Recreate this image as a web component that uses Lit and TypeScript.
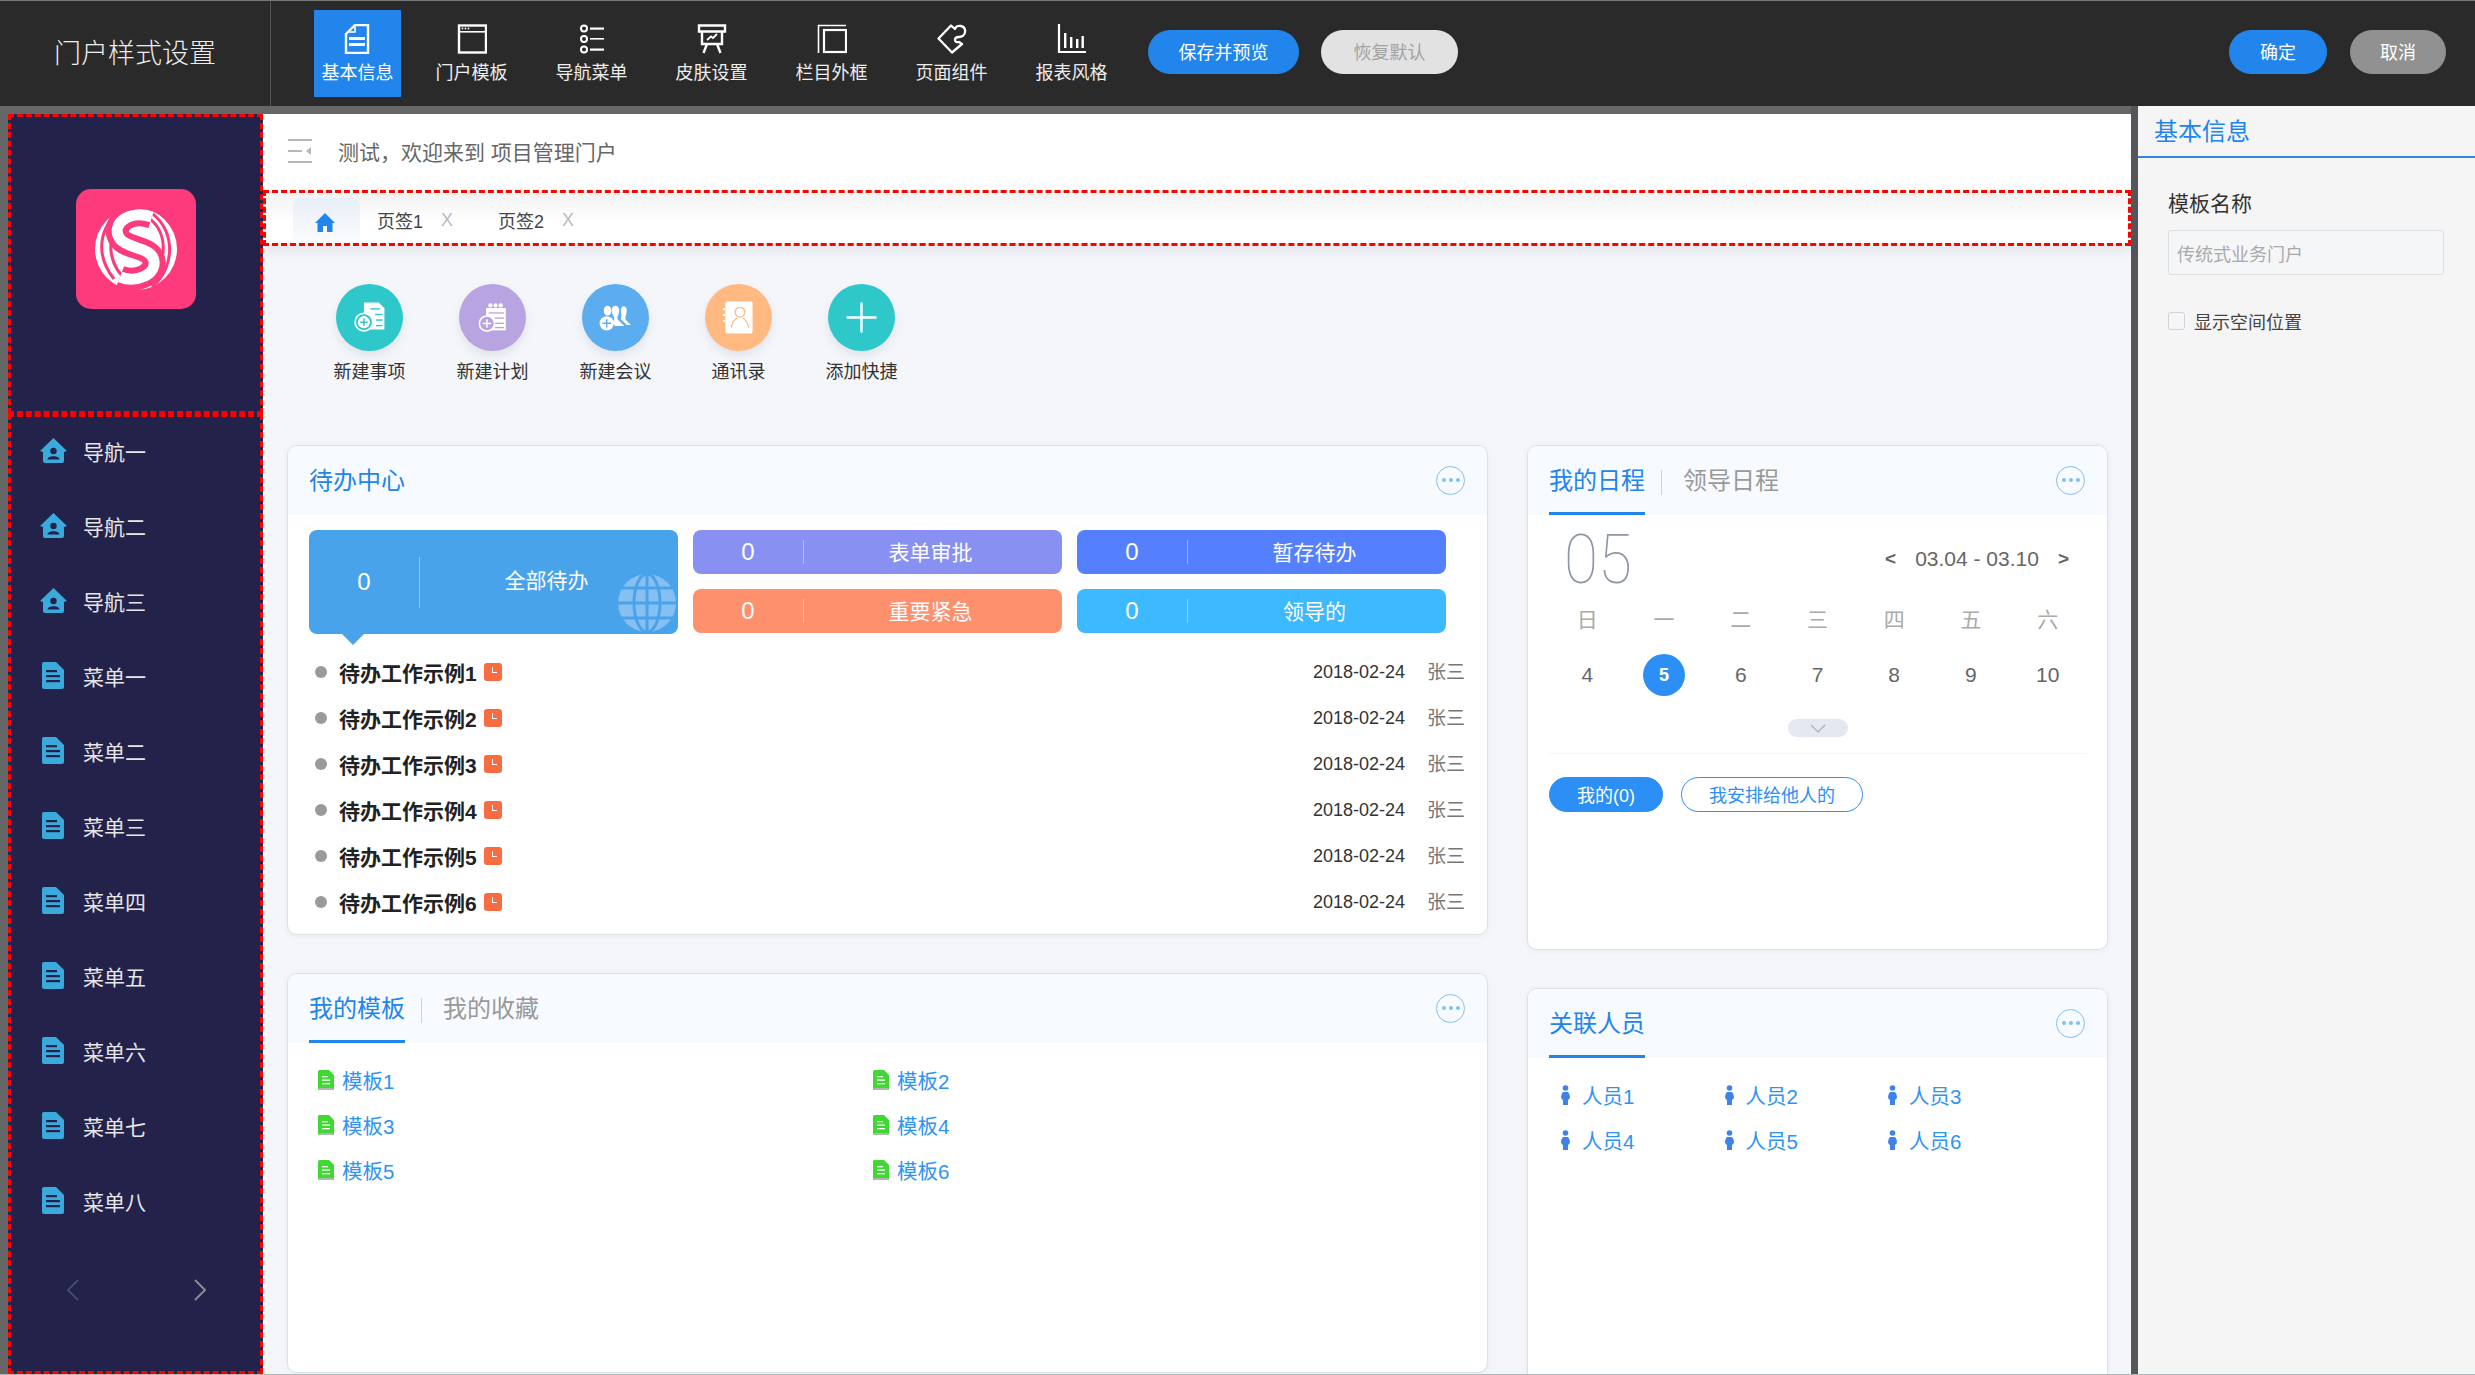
import { LitElement, html, css, svg } from "lit";
import { customElement } from "lit/decorators.js";

const topIcons = [
  svg`<path d="M7 6 L12 1 H25 V29 H3 V10 Z" fill="none" stroke="#fff" stroke-width="2.4"/><path d="M12 1 V8 H4" fill="none" stroke="#fff" stroke-width="1.6"/><rect x="6" y="13" width="16" height="3" fill="#fff"/><rect x="6" y="19" width="16" height="3" fill="#fff"/>`,
  svg`<rect x="2" y="1.5" width="27" height="27" fill="none" stroke="#fff" stroke-width="2.4"/><rect x="2" y="7" width="27" height="1.6" fill="#fff"/><circle cx="5.5" cy="4.5" r=".9" fill="#fff"/><circle cx="8.5" cy="4.5" r=".9" fill="#fff"/><circle cx="11.5" cy="4.5" r=".9" fill="#fff"/>`,
  svg`<g fill="none" stroke="#fff" stroke-width="2"><circle cx="7" cy="4.5" r="3"/><circle cx="7" cy="15" r="3"/><circle cx="7" cy="25.5" r="3"/></g><rect x="13" y="3.5" width="14" height="2.2" fill="#fff"/><rect x="13" y="14" width="14" height="1.6" fill="#fff"/><rect x="13" y="24.5" width="14" height="2.2" fill="#fff"/>`,
  svg`<g fill="none" stroke="#fff" stroke-width="2.4"><path d="M2 1.5 H28 V7.5 H2 Z"/><path d="M5 7.5 V20 H25 V7.5"/><path d="M10 20 L6.5 29 M20 20 L23.5 29"/></g><path d="M10 16 L14 12.5 L16 14 L20 10" fill="none" stroke="#fff" stroke-width="1.8"/>`,
  svg`<path d="M1.5 29 V1.5 H29" fill="none" stroke="#fff" stroke-width="1.6"/><rect x="7" y="6" width="22" height="22" fill="none" stroke="#fff" stroke-width="2.2"/>`,
  svg`<path d="M1.500 14.500 L14 1.500 L18 5 C19 0 29 1 28 8 C28 11 25 13 22 13 C20 13 18 14 18 16 C18 18 20 18.500 22 18 L25 20 L15 28.500 Z" fill="none" stroke="#fff" stroke-width="2.300" stroke-linejoin="round"/>`,
  svg`<path d="M2 0 V28 H29" fill="none" stroke="#fff" stroke-width="2.2"/><g fill="#fff"><rect x="7" y="9" width="2.4" height="15"/><rect x="13" y="13" width="2.4" height="11"/><rect x="19" y="15" width="2.400" height="9"/><rect x="24.500" y="12" width="2.400" height="12"/></g>`,
];
const tabs = ["基本信息", "门户模板", "导航菜单", "皮肤设置", "栏目外框", "页面组件", "报表风格"];

const quick = [
  { label: "新建事项", color: "#2ec8ca", box: "-16 -8 72 72", icon: svg`<path d="M14 12 H30 L36 18 V41 H14 Z" fill="#fff"/><g fill="#2ec8ca"><rect x="21" y="18" width="10" height="1.500"/><rect x="26" y="24" width="8" height="1.500"/><rect x="27" y="30" width="7" height="1.500"/><rect x="27" y="36" width="7" height="1.500"/></g><circle cx="14" cy="33" r="9.500" fill="#2ec8ca" stroke="#fff" stroke-width="1.800"/><circle cx="14" cy="33" r="6.500" fill="#fff"/><path d="M14 29 V37 M10 33 H18" stroke="#2ec8ca" stroke-width="1.600"/>` },
  { label: "新建计划", color: "#b7a4e0", box: "-16.500 -14 78 78", icon: svg`<path d="M15 14 H38 V40 H15 Z" fill="#fff"/><g fill="#fff"><circle cx="20" cy="11" r="2.500"/><circle cx="26" cy="11" r="2.500"/><circle cx="32" cy="11" r="2.500"/></g><g fill="#b7a4e0"><rect x="18" y="19" width="18" height="1.500"/><rect x="25" y="25" width="11" height="1.500"/><rect x="25" y="31" width="11" height="1.500"/><rect x="25" y="36" width="11" height="1.500"/></g><circle cx="16" cy="32" r="8.800" fill="#b7a4e0" stroke="#fff" stroke-width="1.800"/><path d="M16 27 V37 M11 32 H21" stroke="#fff" stroke-width="1.800"/>` },
  { label: "新建会议", color: "#5badf0", box: "-13.500 -14 80 80", icon: svg`<path d="M22 17 C22 10 31 10 31 18 C31 22 28 25 29 28 L37 36 H26 C22 32 26 28 25 26 C24 24 22 22 22 17 Z" fill="#fff"/><path d="M33 17 C33 11 40 11 40 18 C40 23 37 25 39 29 L45 35 H40 L33 28 C34 25 33 21 33 17 Z" fill="#fff"/><ellipse cx="17" cy="18" rx="4.500" ry="6" fill="#fff"/><circle cx="16" cy="33" r="8.500" fill="#fff"/><path d="M16 28 V38 M11 33 H21" stroke="#5badf0" stroke-width="1.800"/>` },
  { label: "通讯录", color: "#ffb981", box: "-9 -9 69 69", icon: svg`<rect x="12" y="9" width="28" height="33" rx="2" fill="#fff"/><g stroke="#ffb981" stroke-width="1.300" fill="none"><path d="M9.500 17 H14 M9.500 23 H14 M9.500 29 H14" stroke="#fff" stroke-width="2"/><circle cx="27" cy="20" r="5"/><path d="M18 36 C19 29 23 27 24 26 M36 36 C35 29 31 27 30 26"/></g>` },
  { label: "添加快捷", color: "#2ec8ca", box: "-7.500 -6.500 67 67", icon: svg`<path d="M26 13 V41 M12 27 H40" stroke="#fff" stroke-width="2.400" stroke-linecap="round"/>` },
];

const menu = [
  ["导航一", "home"], ["导航二", "home"], ["导航三", "home"],
  ["菜单一", "doc"], ["菜单二", "doc"], ["菜单三", "doc"], ["菜单四", "doc"],
  ["菜单五", "doc"], ["菜单六", "doc"], ["菜单七", "doc"], ["菜单八", "doc"],
];

const stats = [
  { label: "表单审批", cls: "violet" },
  { label: "暂存待办", cls: "royal" },
  { label: "重要紧急", cls: "coral" },
  { label: "领导的", cls: "sky" },
];

const homeIcon = html`<svg class="nav-home" viewBox="0 0 27 25"><path d="M13.500 0 L27 13 L24 14 V23 Q24 25 22 25 H5 Q3 25 3 23 V14 L0 13 Z" fill="#3aa9dc"/><circle cx="13.500" cy="13" r="3.200" fill="#22224b"/><path d="M7.500 21.500 C7.500 17 19.500 17 19.500 21.500 Z" fill="#22224b"/></svg>`;
const docIcon = html`<svg class="nav-doc" viewBox="0 0 22 27"><path d="M2 0 H14 L22 8 V25 Q22 27 20 27 H2 Q0 27 0 25 V2 Q0 0 2 0 Z" fill="#3aa9dc"/><g fill="#22224b"><rect x="4" y="8" width="11" height="2.200"/><rect x="4" y="13" width="14" height="2.200"/><rect x="4" y="18" width="14" height="2.200"/></g></svg>`;
const moreBtn = html`<span class="more"><i></i><i></i><i></i></span>`;

@customElement("app-root")
export class AppRoot extends LitElement {
  static styles = css`
    :host {
      display: block;
      width: 2475px;
      height: 1375px;
      overflow: hidden;
      font-family: "Liberation Sans", "Noto Sans CJK SC", sans-serif;
      color: #333;
    }
    * { box-sizing: border-box; }
    .shell { width: 2475px; height: 1375px; display: flex; flex-direction: column; background: #666; border-bottom: 1px solid #aeb8bc; overflow: hidden; }
    .top { height: 106px; flex: none; background: #2a2a2a; border-top: 1px solid #777; display: flex; align-items: flex-start; color: #fff; }
    .brand { width: 271px; height: 105px; border-right: 1px solid #555; display: flex; align-items: center; justify-content: center; font-size: 27px; font-weight: 300; color: #eee; flex: none; padding-bottom: 4px; }
    .top-tabs { display: flex; gap: 33px; margin-left: 43px; margin-top: 9px; }
    .top-tab { width: 87px; height: 87px; display: flex; flex-direction: column; align-items: center; padding-top: 14px; font-size: 18px; line-height: 24px; white-space: nowrap; color: #eee; }
    .top-tab.on { background: #2185eb; color: #fff; margin-right: -6px; }
    .top-tab svg { width: 30px; height: 30px; margin-bottom: 7px; flex: none; }
    .btn { height: 44px; border-radius: 22px; display: flex; align-items: center; justify-content: center; font-size: 18px; flex: none; margin-top: 29px; padding-bottom: 2px; }
    .btn.blue { background: #2185eb; color: #fff; }
    .btn.light { background: #e2e2e2; color: #a3a3a3; }
    .btn.gray { background: #919191; color: #fff; }
    .save { width: 151px; margin-left: 33px; }
    .reset { width: 137px; margin-left: 22px; }
    .ok { width: 98px; margin-left: auto; }
    .cancel { width: 96px; margin-left: 23px; margin-right: 29px; }

    .body { flex: 1; display: flex; min-height: 0; }
    .stage { flex: 1; display: flex; padding: 8px 0 0 8px; min-width: 0; }
    .side { width: 255px; flex: none; background: #22224b; display: flex; flex-direction: column; }
    .logo-box { height: 300px; flex: none; border: 3px dashed #f00; padding: 72px 0 0 65px; }
    .logo { width: 120px; height: 120px; }
    .nav { flex: 1; border: 3px dashed #f00; display: flex; flex-direction: column; gap: 5px; padding-left: 29px; overflow: hidden; }
    .nav-row { height: 70px; flex: none; display: flex; align-items: center; color: #e6e6e6; font-size: 21px; padding-bottom: 3px; }
    .nav-ico { width: 43px; flex: none; display: flex; justify-content: flex-start; }
    .nav-home { width: 27px; height: 25px; }
    .nav-doc { width: 22px; height: 27px; margin-left: 2px; }
    .pager { display: flex; justify-content: space-between; padding: 37px 53px 0 26px; }
    .pager svg { width: 13px; height: 22px; }

    .main { flex: 1; min-width: 0; display: flex; flex-direction: column; }
    .hello { height: 76px; flex: none; background: #fff; display: flex; align-items: center; padding-left: 25px; font-size: 21px; color: #666; padding-bottom: 3px; }
    .hello svg { width: 24px; height: 24px; margin-right: 26px; }
    .strip { height: 56px; flex: none; position: relative; z-index: 1; border: 3px dashed #f00; background: linear-gradient(#f3f3f3, #fff 60%); display: flex; align-items: flex-end; padding-left: 27px; box-shadow: 0 6px 10px rgba(60, 70, 100, .08); }
    .home-tab { width: 67px; height: 45px; border-radius: 8px 8px 0 0; background: linear-gradient(#e8eff8, #fbfcfe); display: flex; align-items: center; justify-content: center; padding: 4px 3px 0 0; }
    .home-tab svg { width: 20px; height: 19px; }
    .page-tab { font-size: 18px; color: #444; display: flex; height: 45px; align-items: center; padding-bottom: 1px; }
    .page-tab b { font-weight: 400; color: #b6bdc3; margin-left: 18px; }
    .t1 { margin-left: 17px; }
    .t2 { margin-left: 45px; }

    .content { flex: 1; min-height: 0; overflow: hidden; background: #f4f6fa; padding: 38px 0 0 24px; }
    .quick { display: flex; margin-left: 21px; height: 161px; }
    .q { width: 123px; display: flex; flex-direction: column; align-items: center; font-size: 18px; line-height: 24px; color: #333; }
    .q-c { width: 67px; height: 67px; border-radius: 50%; margin-bottom: 9px; box-shadow: 0 5px 10px rgba(90, 100, 130, .12); }
    .q-c svg { width: 67px; height: 67px; display: block; }
    .cols { display: flex; gap: 39px; align-items: flex-start; }
    .col { display: flex; flex-direction: column; gap: 38px; flex: none; }
    .col.l { width: 1201px; }
    .col.r { width: 581px; }
    .card { background: #fff; border: 1px solid #dde1e6; border-radius: 10px; box-shadow: 0 1px 6px rgba(90, 100, 130, .08); overflow: hidden; flex: none; }
    .h-todo { height: 490px; }
    .h-tpl { height: 400px; }
    .h-cal { height: 505px; }
    .h-ppl { height: 400px; }
    .card-h { height: 70px; background: #f7faff; display: flex; align-items: stretch; padding: 0 22px 0 21px; font-size: 24px; margin-top: -1px; }
    .tab { display: flex; align-items: center; border-bottom: 3px solid transparent; color: #999; }
    .tab.on { color: #2185eb; border-bottom-color: #2185eb; }
    .tab.plain { border-bottom-color: transparent; }
    .bar { width: 1px; height: 25px; background: #cfd3d8; margin: 25px 21px 0 16px; }
    .more { margin-left: auto; align-self: center; width: 29px; height: 29px; border: 1px solid #7cc0f5; border-radius: 50%; display: flex; align-items: center; justify-content: center; gap: 3px; }
    .more i { width: 4px; height: 4px; border-radius: 50%; background: #7cc0f5; }

    .todo { padding: 15px 22px 0 21px; }
    .stat-grid { display: grid; grid-template-columns: repeat(3, 369px); grid-template-rows: 44px 45px; gap: 15px; }
    .stat { height: 44px; border-radius: 8px; color: #fff; display: flex; align-items: center; font-size: 21px; }
    .stat .n { width: 110px; flex: none; text-align: center; font-size: 24px; }
    .stat .sep { width: 1px; height: 24px; background: rgba(255, 255, 255, .4); flex: none; }
    .stat .t { flex: 1; text-align: center; padding: 0 5px 3px 0; }
    .violet { background: #8891f2; }
    .royal { background: #5480ff; }
    .coral { background: #ff906e; }
    .sky { background: #3cb9ff; }
    .big { grid-row: 1 / span 2; height: 104px; background: #48a3eb; position: relative; }
    .big .sep { height: 51px; }
    .big .t { padding-bottom: 6px; }
    .big::after { content: ""; position: absolute; left: 33px; top: 104px; border: 11px solid transparent; border-top-color: #48a3eb; border-bottom: 0; }
    .globe { position: absolute; right: 0; bottom: 2px; width: 61px; height: 58px; }
    .list { margin-top: 15px; }
    .row { height: 46px; display: flex; align-items: center; padding-right: 0; }
    .dot { width: 12px; height: 12px; border-radius: 50%; background: #9a9a9a; margin-left: 6px; }
    .row .name { font-size: 21px; font-weight: 700; color: #222; margin-left: 12px; }
    .flag { width: 18px; height: 18px; border-radius: 3px; background: #f96b40; margin-left: 7px; position: relative; }
    .flag::after { content: ""; position: absolute; left: 8px; top: 4px; width: 4px; height: 5px; border-left: 1.500px solid #fff; border-bottom: 1.500px solid #fff; }
    .date { margin-left: auto; font-size: 18px; color: #333; }
    .who { margin-left: 22px; font-size: 19px; color: #777; padding-bottom: 3px; }

    .tpl { display: grid; grid-template-columns: 555px 555px; grid-auto-rows: 45px; padding: 16px 0 0 30px; }
    .link { display: flex; align-items: center; color: #2f93f3; font-size: 20.500px; padding-bottom: 4px; }
    .link svg { width: 16px; height: 20px; margin-right: 8px; flex: none; }
    .ppl { display: grid; grid-template-columns: repeat(3, 163.500px); grid-auto-rows: 45px; padding: 16px 0 0 33px; }
    .ppl .link svg { width: 9px; height: 20px; margin-right: 12px; }

    .cal { padding: 0 21px; }
    .cal-head { height: 87px; display: flex; align-items: center; }
    .day-big { font-family: Roboto, sans-serif; font-weight: 100; font-size: 62px; color: #8d96a3; margin-left: 15px; transform: scaleY(1.12); }
    .range { margin-left: auto; display: flex; align-items: center; color: #666; font-size: 21px; margin-right: 17px; }
    .range b { font-weight: 700; font-size: 19px; }
    .range span { margin: 0 19px; }
    .week { display: grid; grid-template-columns: repeat(7, 1fr); height: 36px; align-items: center; text-align: center; font-size: 21px; color: #aaa; padding-bottom: 5px; }
    .days { display: grid; grid-template-columns: repeat(7, 1fr); height: 42px; margin-top: 16px; align-items: center; justify-items: center; font-size: 21px; color: #666; }
    .days span { width: 42px; height: 42px; display: flex; align-items: center; justify-content: center; border-radius: 50%; }
    .days .now { background: #2b8ff5; color: #fff; font-weight: 700; font-size: 18px; }
    .pill { width: 60px; height: 18px; background: #e4e8f0; border-radius: 9px; margin: 23px auto 0; display: flex; align-items: center; justify-content: center; }
    .pill svg { width: 16px; height: 9px; }
    .rule { height: 1px; background: #f5f6f8; margin-top: 16px; }
    .chips { display: flex; gap: 18px; margin-top: 23px; }
    .chip { height: 35px; border-radius: 18px; display: flex; align-items: center; justify-content: center; font-size: 18px; border: 1px solid #2b8ff5; color: #2b8ff5; padding-bottom: 2px; }
    .chip.on { width: 114px; background: #2b8ff5; color: #fff; }
    .chip.off { width: 182px; }

    .panel { width: 344px; flex: none; background: #f5f5f5; border-left: 7px solid #55555a; }
    .panel-h { height: 52px; border-bottom: 2px solid #2b86e4; font-size: 24px; color: #2185eb; padding: 9px 0 0 16px; line-height: 34px; }
    .panel-b { padding: 32px 24px 0 30px; }
    .lab { font-size: 21px; color: #333; line-height: 28px; }
    .inp { width: 276px; height: 45px; margin-top: 12px; background: #f5f6f8; border: 1px solid #dcdfe3; border-radius: 3px; display: flex; align-items: center; padding-left: 8px; font-size: 18px; color: #aaa; }
    .chk { display: flex; align-items: center; margin-top: 33px; font-size: 18px; color: #444; }
    .chk i { width: 17px; height: 18px; border: 1px solid #cdd3da; border-radius: 3px; background: #f5f6f8; margin-right: 9px; }
  `;

  private card(tabsList: string[], cls: string, body: unknown, plain = false) {
    return html`<div class="card ${cls}">
      <div class="card-h">
        ${tabsList.map(
          (t, i) => html`${i ? html`<span class="bar"></span>` : ""}<span class="tab ${i === 0 ? "on" : ""} ${plain ? "plain" : ""}">${t}</span>`
        )}
        ${moreBtn}
      </div>
      ${body}
    </div>`;
  }

  render() {
    const greenDoc = svg`<path d="M1.500 0 H11 L16 5 V18.500 Q16 20 14.500 20 H1.500 Q0 20 0 18.500 V1.500 Q0 0 1.500 0 Z" fill="#40d832"/><path d="M1 18 H15 V19 Q15 20 14 20 H2 Q1 20 1 19 Z" fill="#b5b5b5"/><g fill="#fff"><rect x="4" y="6" width="6" height="1.300"/><rect x="4" y="9.500" width="8" height="1.300"/><rect x="4" y="13" width="8" height="1.300"/></g>`;
    const person = svg`<circle cx="4.500" cy="3" r="2.800" fill="#3f82ea"/><path d="M2 7 H7 Q9 9 9 12 Q9 14 7 15 V20 H2 V15 Q0 14 0 12 Q0 9 2 7 Z" fill="#3f82ea"/>`;
    return html`<div class="shell">
      <header class="top">
        <div class="brand">门户样式设置</div>
        <nav class="top-tabs">
          ${tabs.map(
            (t, i) => html`<div class="top-tab ${i === 0 ? "on" : ""}"><svg viewBox="0 0 30 30">${topIcons[i]}</svg>${t}</div>`
          )}
        </nav>
        <div class="btn blue save">保存并预览</div>
        <div class="btn light reset">恢复默认</div>
        <div class="btn blue ok">确定</div>
        <div class="btn gray cancel">取消</div>
      </header>
      <div class="body">
        <div class="stage">
          <aside class="side">
            <div class="logo-box">
              <svg class="logo" viewBox="0 0 120 120">
                <rect width="120" height="120" rx="15" fill="#fd3a7c"/>
                <circle cx="60" cy="60" r="41" fill="#fff"/>
                <g fill="none" stroke="#fd3a7c">
                  <path d="M50 20 C26 30 16 62 38 90" stroke-width="3"/>
                  <path d="M46 32 C30 46 30 76 54 94" stroke-width="3"/>
                  <path d="M72 22 C98 36 102 76 76 98" stroke-width="3"/>
                  <path d="M74 30 C92 44 92 76 72 90" stroke-width="3"/>
                  <path d="M76 28 C52 20 34 36 44 50 C52 60 76 58 78 72 C80 86 60 94 44 88" stroke-width="23"/>
                </g>
                <path d="M76 28 C52 20 34 36 44 50 C52 60 76 58 78 72 C80 86 60 94 44 88" fill="none" stroke="#fff" stroke-width="11"/>
              </svg>
            </div>
            <div class="nav">
              ${menu.map(
                ([t, k]) => html`<div class="nav-row"><span class="nav-ico">${k === "home" ? homeIcon : docIcon}</span>${t}</div>`
              )}
              <div class="pager">
                <svg viewBox="0 0 13 22"><path d="M12 1 L2 11 L12 21" fill="none" stroke="#454a69" stroke-width="2"/></svg>
                <svg viewBox="0 0 13 22"><path d="M1 1 L11 11 L1 21" fill="none" stroke="#8a8a92" stroke-width="2"/></svg>
              </div>
            </div>
          </aside>
          <main class="main">
            <div class="hello">
              <svg viewBox="0 0 24 24"><g fill="#b4b8bd"><rect y="0" width="24" height="2"/><rect y="11" width="14" height="2"/><rect y="22" width="24" height="2"/><path d="M23 8 V16 L18 12 Z"/></g></svg>
              测试，欢迎来到 项目管理门户
            </div>
            <div class="strip">
              <div class="home-tab"><svg viewBox="0 0 20 19"><path d="M10 0 L20 10 L17.500 10 V19 H12 V13 H8 V19 H2.500 V10 L0 10 Z" fill="#2185eb"/></svg></div>
              <div class="page-tab t1">页签1<b>X</b></div>
              <div class="page-tab t2">页签2<b>X</b></div>
            </div>
            <div class="content">
              <div class="quick">
                ${quick.map(
                  (q) => html`<div class="q"><div class="q-c" style="background:${q.color}"><svg viewBox=${q.box}>${q.icon}</svg></div>${q.label}</div>`
                )}
              </div>
              <div class="cols">
                <div class="col l">
                  ${this.card(
                    ["待办中心"],
                    "h-todo",
                    html`<div class="todo">
                      <div class="stat-grid">
                        <div class="stat big">
                          <span class="n">0</span><span class="sep"></span><span class="t">全部待办</span>
                          <svg class="globe" viewBox="0 0 61 58">
                            <circle cx="30" cy="29" r="29" fill="#86bff2"/>
                            <g fill="none" stroke="#48a3eb" stroke-width="3">
                              <ellipse cx="30" cy="29" rx="13" ry="29"/>
                              <path d="M30 0 V58 M0 29 H61 M5 14 H55 M5 44 H55"/>
                            </g>
                          </svg>
                        </div>
                        ${stats.map(
                          (s) => html`<div class="stat ${s.cls}"><span class="n">0</span><span class="sep"></span><span class="t">${s.label}</span></div>`
                        )}
                      </div>
                      <div class="list">
                        ${[1, 2, 3, 4, 5, 6].map(
                          (n) => html`<div class="row"><i class="dot"></i><span class="name">待办工作示例${n}</span><i class="flag"></i><span class="date">2018-02-24</span><span class="who">张三</span></div>`
                        )}
                      </div>
                    </div>`,
                    true
                  )}
                  ${this.card(
                    ["我的模板", "我的收藏"],
                    "h-tpl",
                    html`<div class="tpl">
                      ${[1, 2, 3, 4, 5, 6].map(
                        (n) => html`<div class="link"><svg viewBox="0 0 16 20">${greenDoc}</svg>模板${n}</div>`
                      )}
                    </div>`
                  )}
                </div>
                <div class="col r">
                  ${this.card(
                    ["我的日程", "领导日程"],
                    "h-cal",
                    html`<div class="cal">
                      <div class="cal-head">
                        <span class="day-big">05</span>
                        <div class="range"><b>&lt;</b><span>03.04 - 03.10</span><b>&gt;</b></div>
                      </div>
                      <div class="week">${["日", "一", "二", "三", "四", "五", "六"].map((d) => html`<div>${d}</div>`)}</div>
                      <div class="days">${[4, 5, 6, 7, 8, 9, 10].map((d) => html`<span class="${d === 5 ? "now" : ""}">${d}</span>`)}</div>
                      <div class="pill"><svg viewBox="0 0 16 9"><path d="M1 1 L8 8 L15 1" fill="none" stroke="#a9afb8" stroke-width="1.200"/></svg></div>
                      <div class="rule"></div>
                      <div class="chips"><div class="chip on">我的(0)</div><div class="chip off">我安排给他人的</div></div>
                    </div>`
                  )}
                  ${this.card(
                    ["关联人员"],
                    "h-ppl",
                    html`<div class="ppl">
                      ${[1, 2, 3, 4, 5, 6].map(
                        (n) => html`<div class="link"><svg viewBox="0 0 9 20">${person}</svg>人员${n}</div>`
                      )}
                    </div>`
                  )}
                </div>
              </div>
            </div>
          </main>
        </div>
        <aside class="panel">
          <div class="panel-h">基本信息</div>
          <div class="panel-b">
            <div class="lab">模板名称</div>
            <div class="inp">传统式业务门户</div>
            <div class="chk"><i></i>显示空间位置</div>
          </div>
        </aside>
      </div>
    </div>`;
  }
}
